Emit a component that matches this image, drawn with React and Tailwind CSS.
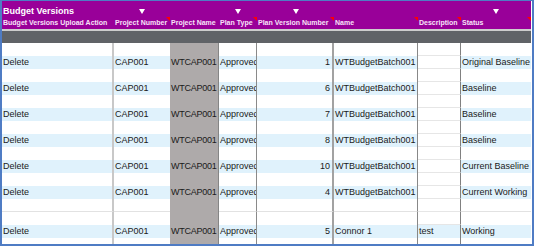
import React from "react"

const font = "font-['Liberation_Sans',Arial,sans-serif]"

// column widths, left to right (px): 112 56 49 38 77 84 43 70
const headCells = [
    { label: "Budget Versions Upload Action", w: "w-[112px]", mark: false, filter: false },
    { label: "Project Number", w: "w-[56px]", mark: true, filter: true },
    { label: "Project Name", w: "w-[49px]", mark: false, filter: false },
    { label: "Plan Type", w: "w-[38px]", mark: true, filter: true },
    { label: "Plan Version Number", w: "w-[77px]", mark: true, filter: true },
    { label: "Name", w: "w-[84px]", mark: true, filter: false },
    { label: "Description", w: "w-[43px]", mark: true, filter: false },
    { label: "Status", w: "w-[70px]", mark: true, filter: true },
]

const rec = (ver, name, desc, status) => ({
    action: "Delete", proj: "CAP001", pname: "WTCAP001", type: "Approved", ver, name, desc, status,
})

const rows = [
    null,
    rec("1", "WTBudgetBatch001", "", "Original Baseline"),
    null,
    rec("6", "WTBudgetBatch001", "", "Baseline"),
    null,
    rec("7", "WTBudgetBatch001", "", "Baseline"),
    null,
    rec("8", "WTBudgetBatch001", "", "Baseline"),
    null,
    rec("10", "WTBudgetBatch001", "", "Current Baseline"),
    null,
    rec("4", "WTBudgetBatch001", "", "Current Working"),
    "line",
    null,
    rec("5", "Connor 1", "test", "Working"),
    null,
]

const cell = "h-[13px] leading-[13px] overflow-hidden whitespace-nowrap px-[1px] shrink-0"

const Row = ({ r }) => {
    const isRec = r && r !== "line"
    const band = isRec ? "bg-[#e0f2fc]" : "bg-white"
    const line = r === "line" ? "border-b border-[#e2e2e2]" : ""
    const descBg = isRec && r.desc ? "bg-[#e0f2fc]" : "bg-white border-b border-[#e6e6e6]"
    return (
        <div className="flex text-[9px] text-[#1a1a1a]">
            <div className={`${cell} w-[112px] ${band} ${line} border-r-2 border-r-[#c8c8c8]`}>{isRec ? r.action : ""}</div>
            <div className={`${cell} w-[56px] ${band} ${line}`}>{isRec ? r.proj : ""}</div>
            <div className={`${cell} w-[49px] bg-[#aeaaaa] border-r border-r-[#858585] tracking-[-0.25px]`}>{isRec ? r.pname : ""}</div>
            <div className={`${cell} w-[38px] ${band} ${line} border-r border-r-[#8a8a8a]`}>{isRec ? r.type : ""}</div>
            <div className={`${cell} w-[77px] ${band} ${line} border-r-2 border-r-[#a2a2a2] text-right pr-[2px]`}>{isRec ? r.ver : ""}</div>
            <div className={`${cell} w-[84px] ${band} ${line} border-r border-r-[#888888]`}>{isRec ? r.name : ""}</div>
            <div className={`${cell} w-[43px] ${descBg} border-r border-r-[#808080]`}>{isRec ? r.desc : ""}</div>
            <div className={`${cell} w-[70px] ${band} ${line}`}>{isRec ? r.status : ""}</div>
        </div>
    )
}

const App = () => {
    return (
        <div className={`w-[534px] h-[246px] bg-[#4f7cc4] pl-[2px] pt-[1px] pr-[2px] pb-[2px] ${font}`}>
            <div className="bg-white h-full overflow-hidden pr-[1px] flex flex-col">
                {/* title row with filter arrows */}
                <div className="flex bg-[#990099] h-[16px] pt-[4px] shrink-0">
                    {headCells.map((c, i) => (
                        <div key={i} className={`${c.w} shrink-0 h-[12px] flex items-center ${i === 0 ? "justify-start" : "justify-center"}`}>
                            {i === 0 && (
                                <span className="text-[9px] leading-[12px] font-bold text-white whitespace-nowrap px-[1px]">Budget Versions</span>
                            )}
                            {c.filter && (
                                <span className="w-0 h-0 border-l-[3px] border-r-[3px] border-t-[5px] border-l-transparent border-r-transparent border-t-white"></span>
                            )}
                        </div>
                    ))}
                </div>
                {/* column labels */}
                <div className="flex bg-[#990099] h-[12px] shrink-0">
                    {headCells.map((c, i) => (
                        <div key={i} className={`${c.w} shrink-0 relative h-[12px] px-[1px] text-[7px] leading-[12px] font-bold text-[#f8e2f8] whitespace-nowrap overflow-hidden`}>
                            {c.label}
                            {c.mark && (
                                <span className="absolute top-0 right-0 w-0 h-0 border-t-[4px] border-l-[4px] border-t-[#ff0000] border-l-transparent"></span>
                            )}
                        </div>
                    ))}
                </div>
                <div className="h-[2px] bg-[#cdcdcd] shrink-0"></div>
                <div className="h-[12px] bg-[#606367] shrink-0"></div>
                {rows.map((r, i) => (
                    <Row key={i} r={r} />
                ))}
            </div>
        </div>
    )
}

export default App
